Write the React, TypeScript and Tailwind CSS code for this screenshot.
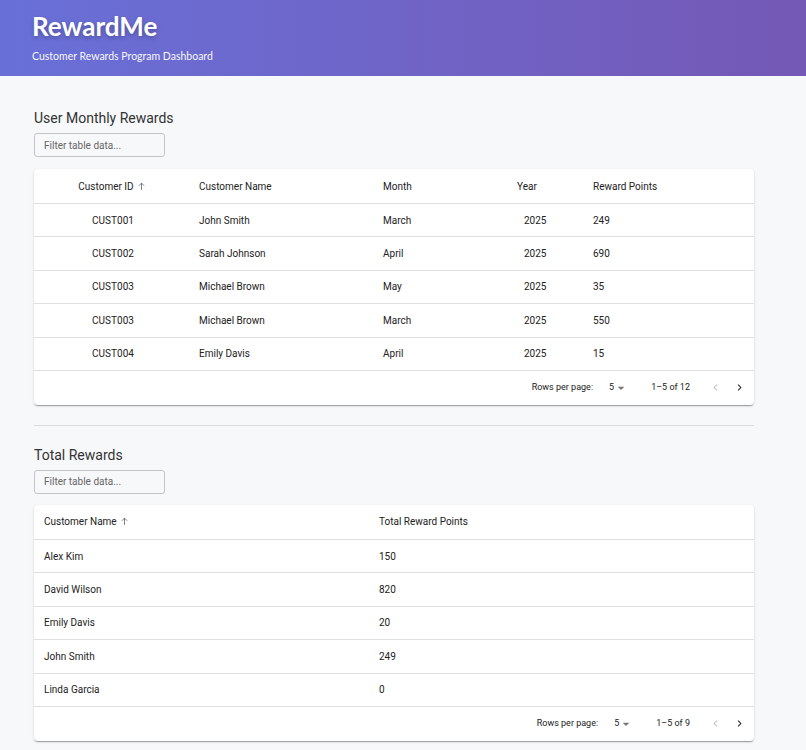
import React from 'react';

const monthly = [
  { id: 'CUST001', name: 'John Smith', month: 'March', year: '2025', points: '249' },
  { id: 'CUST002', name: 'Sarah Johnson', month: 'April', year: '2025', points: '690' },
  { id: 'CUST003', name: 'Michael Brown', month: 'May', year: '2025', points: '35' },
  { id: 'CUST003', name: 'Michael Brown', month: 'March', year: '2025', points: '550' },
  { id: 'CUST004', name: 'Emily Davis', month: 'April', year: '2025', points: '15' },
];

const totals = [
  { name: 'Alex Kim', points: '150' },
  { name: 'David Wilson', points: '820' },
  { name: 'Emily Davis', points: '20' },
  { name: 'John Smith', points: '249' },
  { name: 'Linda Garcia', points: '0' },
];

const SortUp = () => (
  <svg width="9" height="9" viewBox="0 0 24 24" className="ml-[3px] text-[#555]">
    <path d="M12 3v18M5 10l7-7 7 7" fill="none" stroke="currentColor" strokeWidth="2" />
  </svg>
);

const Pagination: React.FC<{ range: string }> = ({ range }) => (
  <div className="h-[34px] flex items-center justify-end pr-[3px] text-[9px] text-[#222]">
    <span>Rows per page:</span>
    <span className="ml-[16px] flex items-center">
      5
      <svg width="16" height="16" viewBox="0 0 24 24" className="ml-[-1px] text-[#777]">
        <path d="M7 10l5 5 5-5z" fill="currentColor" />
      </svg>
    </span>
    <span className="ml-[22px]">{range}</span>
    <span className="ml-[13px] w-[24px] flex justify-center text-[#c4c4c4]">
      <svg width="13" height="13" viewBox="0 0 24 24">
        <path d="M15.4 7.4 14 6l-6 6 6 6 1.4-1.4L10.8 12z" fill="currentColor" />
      </svg>
    </span>
    <span className="w-[24px] flex justify-center text-[#333]">
      <svg width="13" height="13" viewBox="0 0 24 24">
        <path d="M10 6 8.6 7.4 13.2 12l-4.6 4.6L10 18l6-6z" fill="currentColor" />
      </svg>
    </span>
  </div>
);

const Filter = () => (
  <input
    placeholder="Filter table data..."
    className="w-[131px] h-[24px] px-[9px] text-[10px] border border-[#c4c4c4] rounded-[3px] bg-transparent outline-none placeholder:text-[#666]"
  />
);

const card =
  'bg-white rounded-[4px] shadow-[0_2px_1px_-1px_rgba(0,0,0,0.2),0_1px_1px_0_rgba(0,0,0,0.14),0_1px_3px_0_rgba(0,0,0,0.12)] text-[10px] text-[#222]';

export default function App() {
  return (
    <div className="min-h-[750px] bg-[#f7f8fa] font-['Roboto',sans-serif]">
      <header className="h-[76px] bg-gradient-to-r from-[#6870d8] to-[#7458b5] px-[32px] pt-[10px] text-white">
        <h1 className="font-['Lato',sans-serif] font-bold text-[26px] leading-[32px] [text-shadow:0_2px_4px_rgba(0,0,0,0.25)]">
          RewardMe
        </h1>
        <p className="font-['Lato',sans-serif] text-[10.5px] mt-[7px] opacity-95">Customer Rewards Program Dashboard</p>
      </header>

      <main className="pl-[34px] w-[754px] pt-[32px] pb-[10px]">
        <h2 className="text-[14px] leading-[20px] text-[#333]">User Monthly Rewards</h2>
        <div className="mt-[5px] flex">
          <Filter />
        </div>
        <div className={`mt-[12px] ${card}`}>
          <div className="grid grid-cols-[156px_184px_134px_76px_170px] h-[35px] items-center border-b border-[#e0e0e0]">
            <div className="flex items-center justify-center">Customer ID<SortUp /></div>
            <div className="pl-[9px]">Customer Name</div>
            <div className="pl-[9px]">Month</div>
            <div className="pl-[9px]">Year</div>
            <div className="pl-[9px]">Reward Points</div>
          </div>
          {monthly.map((r, i) => (
            <div key={i} className="grid grid-cols-[156px_184px_134px_76px_170px] h-[33.4px] items-center border-b border-[#e0e0e0]">
              <div className="text-center pl-[2px]">{r.id}</div>
              <div className="pl-[9px]">{r.name}</div>
              <div className="pl-[9px]">{r.month}</div>
              <div className="pl-[16px]">{r.year}</div>
              <div className="pl-[9px]">{r.points}</div>
            </div>
          ))}
          <Pagination range="1–5 of 12" />
        </div>

        <div className="mt-[20px] border-t border-[#dcdcdc]" />

        <h2 className="mt-[19px] text-[14px] leading-[20px] text-[#333]">Total Rewards</h2>
        <div className="mt-[5px] flex">
          <Filter />
        </div>
        <div className={`mt-[11px] ${card}`}>
          <div className="grid grid-cols-[335px_1fr] h-[35px] items-center border-b border-[#e0e0e0]">
            <div className="pl-[10px] flex items-center">Customer Name<SortUp /></div>
            <div className="pl-[10px]">Total Reward Points</div>
          </div>
          {totals.map((r, i) => (
            <div key={i} className="grid grid-cols-[335px_1fr] h-[33.4px] items-center border-b border-[#e0e0e0]">
              <div className="pl-[10px]">{r.name}</div>
              <div className="pl-[10px]">{r.points}</div>
            </div>
          ))}
          <Pagination range="1–5 of 9" />
        </div>
      </main>
    </div>
  );
}
